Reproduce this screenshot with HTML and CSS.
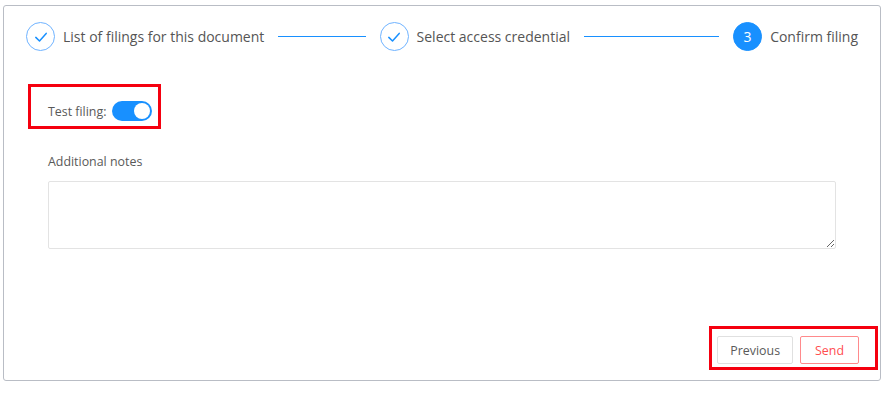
FILE: index.html
```html
<!DOCTYPE html>
<html lang="en">
<head>
  <meta charset="UTF-8" />
  <meta name="viewport" content="width=device-width, initial-scale=1.0"/>
  <title>Confirm filing</title>
  <link rel="stylesheet" href="styles.css">
</head>
<body>
  <div class="card">
    <div class="steps">
      <div class="step done">
        <span class="step-icon">
          <svg width="14" height="14" viewBox="0 0 14 14"><path d="M1.8 7.4 L5.5 11 L12.2 3.4" fill="none" stroke="#1890ff" stroke-width="1.5" stroke-linecap="round" stroke-linejoin="round"/></svg>
        </span>
        <span class="step-title">List of filings for this document</span>
        <span class="step-tail"></span>
      </div>
      <div class="step done">
        <span class="step-icon">
          <svg width="14" height="14" viewBox="0 0 14 14"><path d="M1.8 7.4 L5.5 11 L12.2 3.4" fill="none" stroke="#1890ff" stroke-width="1.5" stroke-linecap="round" stroke-linejoin="round"/></svg>
        </span>
        <span class="step-title">Select access credential</span>
        <span class="step-tail"></span>
      </div>
      <div class="step active">
        <span class="step-icon">3</span>
        <span class="step-title">Confirm filing</span>
      </div>
    </div>

    <form class="filing-form">
      <div class="highlight test-row">
        <label for="testFiling">Test filing:</label>
        <button type="button" id="testFiling" class="switch on" role="switch" aria-checked="true"><span class="knob"></span></button>
      </div>

      <label class="notes-label" for="notes">Additional notes</label>
      <textarea id="notes" class="notes"></textarea>
    </form>

    <div class="footer">
      <div class="highlight actions">
        <button type="button" class="btn">Previous</button>
        <button type="submit" class="btn btn-danger">Send</button>
      </div>
    </div>
  </div>
</body>
</html>
```

FILE: styles.css
```css
* {
  box-sizing: border-box;
}
body {
  margin: 0;
  font-family: "Open Sans", "Noto Sans", sans-serif;
  background: #fff;
  color: #595959;
}
.card {
  margin: 5px 7px 0 3px;
  height: 376px;
  border: 1px solid #b9bdc5;
  border-radius: 3px;
  display: flex;
  flex-direction: column;
}
.steps {
  display: flex;
  padding: 16px 22px 0 22px;
  height: 45px;
}
.step {
  display: flex;
  align-items: center;
  flex: 1;
  height: 29px;
  white-space: nowrap;
}
.step.active {
  flex: none;
}
.step-icon {
  width: 29px;
  height: 29px;
  border-radius: 50%;
  border: 1px solid #6fb3ff;
  display: flex;
  align-items: center;
  justify-content: center;
  flex: none;
  font-size: 14px;
}
.step.active .step-icon {
  background: #1890ff;
  border-color: #1890ff;
  color: #fff;
}
.step-title {
  margin-left: 8px;
  font-size: 14px;
  color: #555;
}
.step-tail {
  flex: 1;
  height: 1px;
  background: #1890ff;
  margin: 0 14px 0 14px;
}
.filing-form {
  display: flex;
  flex-direction: column;
  padding: 33px 44px 0 44px;
}
.highlight {
  border: 3px solid #f5000f;
}
.test-row {
  align-self: flex-start;
  margin-left: -20px;
  display: flex;
  align-items: center;
  padding: 14px 6px 5px 17px;
  font-size: 12.4px;
}
.test-row label {
  margin-right: 6px;
}
.switch {
  width: 40px;
  height: 20px;
  border: none;
  border-radius: 10px;
  padding: 0;
  position: relative;
  background: #bfbfbf;
  cursor: pointer;
}
.switch.on {
  background: #1890ff;
}
.knob {
  position: absolute;
  top: 2px;
  left: 2px;
  width: 16px;
  height: 16px;
  border-radius: 50%;
  background: #fff;
}
.switch.on .knob {
  left: 22px;
}
.notes-label {
  margin-top: 23px;
  height: 20px;
  line-height: 20px;
  font-size: 12.4px;
  margin-bottom: 9px;
}
.notes {
  height: 68px;
  border: 1px solid #e3e3e3;
  border-radius: 2px;
  font-family: inherit;
  resize: vertical;
}
.footer {
  margin-top: auto;
  display: flex;
  justify-content: flex-end;
  padding: 0 2px 10px 0;
}
.actions {
  display: flex;
  gap: 7px;
  padding: 7px 16px 3px 5px;
}
.btn {
  height: 28px;
  padding: 0 12px;
  font-family: inherit;
  font-size: 12.4px;
  color: #595959;
  background: #fff;
  border: 1px solid #e0e0e0;
  border-radius: 2px;
  cursor: pointer;
}
.btn-danger {
  color: #ff4d4f;
  border-color: #ff8a8c;
  padding: 0 14px;
}
```
